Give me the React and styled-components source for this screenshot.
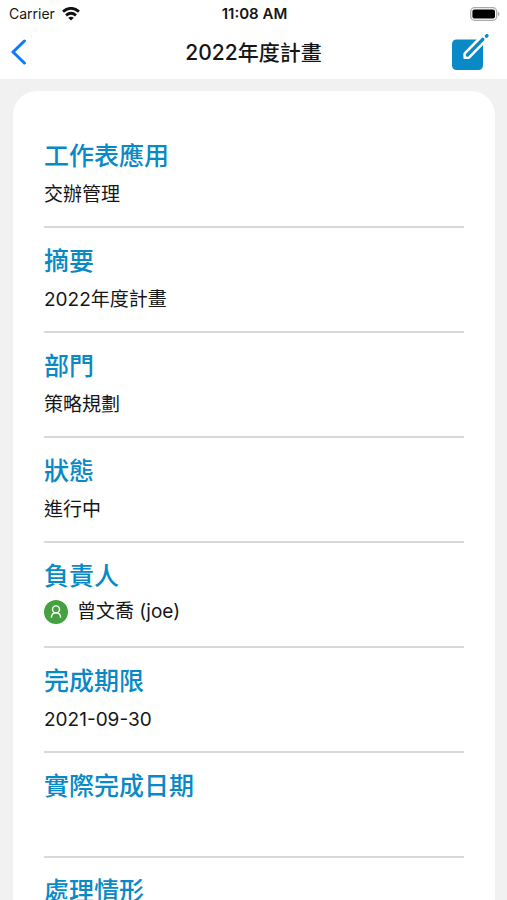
import React from 'react';
import styled, { createGlobalStyle } from 'styled-components';

const GlobalStyle = createGlobalStyle`
  * {
    box-sizing: border-box;
  }

  body {
    margin: 0;
    background: #f1f1f1;
    color: #161616;
    font-family: Inter, "Noto Sans CJK TC", sans-serif;
  }
`;

const Screen = styled.div`
  height: 100vh;
  display: flex;
  flex-direction: column;
`;

const Top = styled.header`
  background: #fff;
  flex: none;
`;

// Phone status bar
const StatusBar = styled.div`
  display: grid;
  grid-template-columns: 1fr auto 1fr;
  align-items: center;
  height: 27px;
  padding: 0 7px 0 9px;
  font-size: 14px;
`;

const Carrier = styled.div`
  display: flex;
  align-items: center;
  gap: 7px;
`;

const Time = styled.div`
  font-size: 15px;
  font-weight: 600;
`;

const Battery = styled.svg`
  justify-self: end;
`;

const NavBar = styled.nav`
  display: grid;
  grid-template-columns: 1fr auto 1fr;
  align-items: center;
  height: 52px;
  padding: 0 9px;
`;

const IconButton = styled.button`
  display: flex;
  justify-self: ${(props) => props.$side};
  padding: ${(props) => (props.$side === 'end' ? '0 8px 0 0' : '0')};
  border: 0;
  background: none;
  cursor: pointer;
`;

const Title = styled.h1`
  margin: 0;
  font-size: 21px;
  line-height: 28px;
  font-weight: 500;
`;

// Scrolls under the fixed top bars
const Card = styled.main`
  flex: 1;
  min-height: 0;
  margin: 12px 12px 0 13px;
  padding: 47px 31px 0;
  border-radius: 24px 24px 0 0;
  background: #fff;
  overflow-y: auto;
  scrollbar-width: none;
`;

const Fields = styled.dl`
  margin: 0;
`;

const Field = styled.div`
  height: 105px;
  padding-top: 15px;
  border-bottom: 2px solid #d9d9d9;

  &:first-child {
    height: 90px;
    padding-top: 0;
  }
`;

const Label = styled.dt`
  color: #0989c6;
  font-size: 25px;
  line-height: 36px;
  font-weight: 500;
`;

const Value = styled.dd`
  display: flex;
  align-items: center;
  gap: 9px;
  margin: 0;
  padding-top: ${(props) => (props.$person ? '3px' : '6px')};
  font-size: 19px;
  line-height: 30px;
`;

const fields = [
  { label: '工作表應用', value: '交辦管理' },
  { label: '摘要', value: '2022年度計畫' },
  { label: '部門', value: '策略規劃' },
  { label: '狀態', value: '進行中' },
  { label: '負責人', value: '曾文喬 (joe)', person: true },
  { label: '完成期限', value: '2021-09-30' },
  { label: '實際完成日期', value: '' },
  { label: '處理情形', value: '' },
];

function WifiIcon() {
  return (
    <svg width="18" height="14" viewBox="0 0 18 14" fill="none" stroke="#111" strokeWidth="2.8" aria-hidden="true">
      <path d="M1 4.6 Q9 -1.9 17 4.6" />
      <path d="M4 8.4 Q9 4.2 14 8.4" />
      <path d="M9 13.6 L6.2 10.8 Q9 8.6 11.8 10.8 Z" fill="#111" stroke="none" />
    </svg>
  );
}

function BatteryIcon() {
  return (
    <Battery width="30" height="14" viewBox="0 0 30 14" aria-hidden="true">
      <rect x="0.7" y="0.7" width="26" height="12.6" rx="4" fill="none" stroke="#aaa" strokeWidth="1.3" />
      <rect x="2.4" y="2.4" width="22.6" height="9.2" rx="2" fill="#000" />
      <path d="M28 4.6 Q31 7 28 9.4 Z" fill="#aaa" />
    </Battery>
  );
}

function BackIcon() {
  return (
    <svg width="20" height="28" viewBox="0 0 20 28" fill="none" stroke="#0a7aff" strokeWidth="3" aria-hidden="true">
      <path d="M15.4 2 L4 13 L15.4 24" strokeLinecap="round" strokeLinejoin="round" />
    </svg>
  );
}

function EditIcon() {
  return (
    <svg width="38" height="38" viewBox="0 0 38 38" aria-hidden="true">
      <rect x="0" y="5.4" width="31" height="30.6" rx="4.5" fill="#0989c6" />
      <path d="M15.6 20.8 L30 6" stroke="#fff" strokeWidth="8.4" strokeLinecap="round" />
      <path d="M12.4 24 L12.8 19 L17.4 23.4 Z" fill="#fff" stroke="#fff" strokeWidth="2" strokeLinejoin="round" />
      <path d="M15.4 21 L30.8 5.4" stroke="#0989c6" strokeWidth="3.4" strokeLinecap="round" />
      <path d="M34.5 2.1 L34.9 1.7" stroke="#0989c6" strokeWidth="3.4" strokeLinecap="round" />
    </svg>
  );
}

function PersonIcon() {
  return (
    <svg width="24" height="24" viewBox="0 0 24 24" fill="none" stroke="#fff" strokeWidth="1.4" aria-hidden="true">
      <circle cx="12" cy="12" r="12" fill="#45a140" stroke="none" />
      <circle cx="12" cy="9.4" r="3.5" />
      <path d="M7.4 17.6 Q7.6 12.9 12 12.9 Q16.4 12.9 16.6 17.6" />
    </svg>
  );
}

function App() {
  return (
    <Screen>
      <GlobalStyle />
      <Top>
        <StatusBar>
          <Carrier>
            Carrier
            <WifiIcon />
          </Carrier>
          <Time>11:08 AM</Time>
          <BatteryIcon />
        </StatusBar>
        <NavBar>
          <IconButton $side="start" aria-label="返回">
            <BackIcon />
          </IconButton>
          <Title>2022年度計畫</Title>
          <IconButton $side="end" aria-label="編輯">
            <EditIcon />
          </IconButton>
        </NavBar>
      </Top>
      <Card>
        <Fields>
          {fields.map(({ label, value, person }) => (
            <Field key={label}>
              <Label>{label}</Label>
              <Value $person={person}>
                {person && <PersonIcon />}
                {value}
              </Value>
            </Field>
          ))}
        </Fields>
      </Card>
    </Screen>
  );
}

export default App;
